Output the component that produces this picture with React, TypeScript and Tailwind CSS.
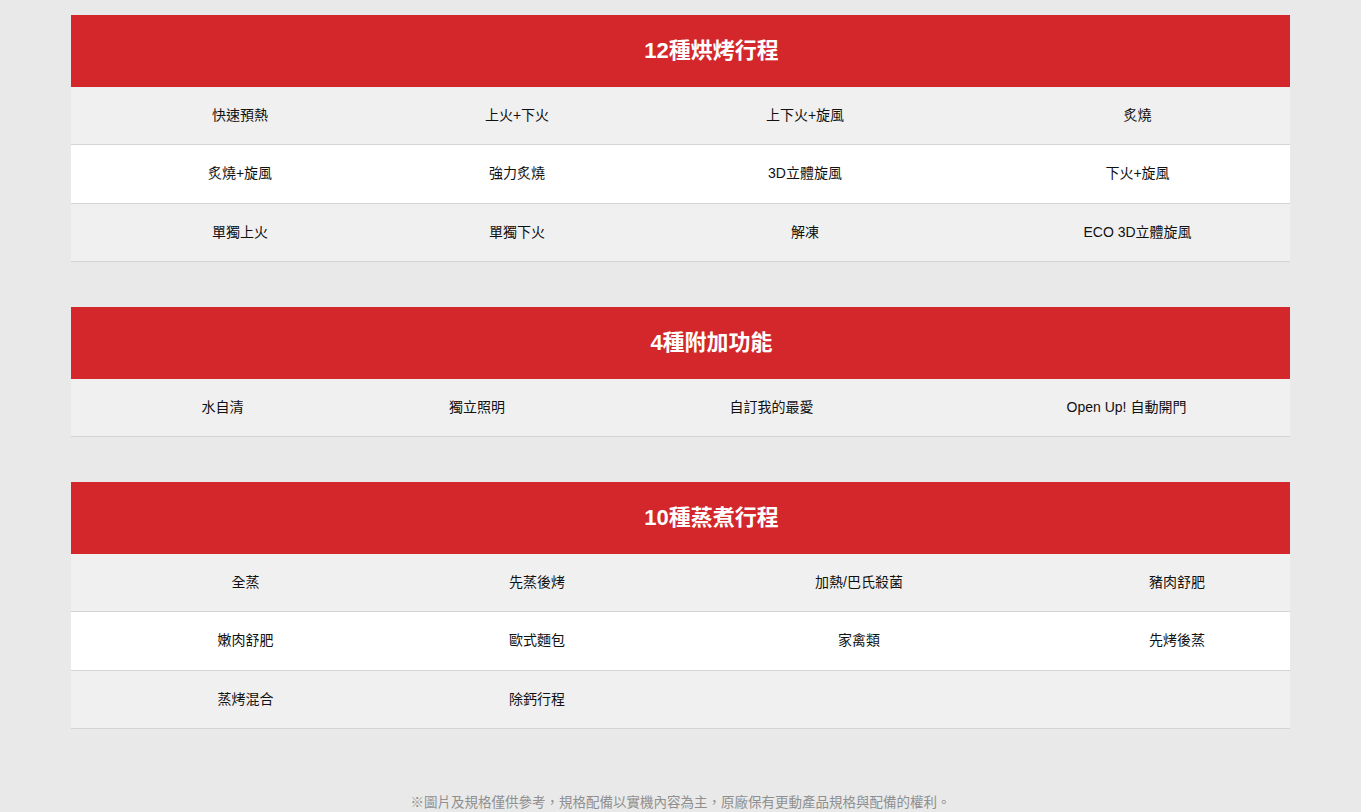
import React from "react";

const font = { fontFamily: '"Liberation Sans", "Noto Sans CJK TC", sans-serif' };

type Section = {
  title: string;
  cols: string;
  rows: string[][];
};

const sections: Section[] = [
  {
    title: "12種烘烤行程",
    cols: "grid-cols-[338px_216px_360px_305px]",
    rows: [
      ["快速預熱", "上火+下火", "上下火+旋風", "炙燒"],
      ["炙燒+旋風", "強力炙燒", "3D立體旋風", "下火+旋風"],
      ["單獨上火", "單獨下火", "解凍", "ECO 3D立體旋風"],
    ],
  },
  {
    title: "4種附加功能",
    cols: "grid-cols-[303px_206px_383px_327px]",
    rows: [["水自清", "獨立照明", "自訂我的最愛", "Open Up! 自動開門"]],
  },
  {
    title: "10種蒸煮行程",
    cols: "grid-cols-[349px_234px_410px_226px]",
    rows: [
      ["全蒸", "先蒸後烤", "加熱/巴氏殺菌", "豬肉舒肥"],
      ["嫩肉舒肥", "歐式麵包", "家禽類", "先烤後蒸"],
      ["蒸烤混合", "除鈣行程", "", ""],
    ],
  },
];

function SpecTable({ section }: { section: Section }) {
  return (
    <div className="w-full">
      <div className="h-[71.5px] bg-[#d3272b] flex items-center justify-center pl-[62px] text-white text-[22px] font-bold">
        {section.title}
      </div>
      {section.rows.map((row, i) => (
        <div
          key={i}
          className={`grid ${section.cols} h-[58.5px] border-b border-[#d4d4d4] ${i % 2 == 0 ? "bg-[#f0f0f0]" : "bg-white"}`}
        >
          {row.map((cell, j) => (
            <div key={j} className="flex items-center justify-center text-[14px] text-[#111]">
              {cell}
            </div>
          ))}
        </div>
      ))}
    </div>
  );
}

export default function App() {
  return (
    <div className="min-h-[812px] bg-[#e9e9e9]" style={font}>
      <div className="w-[1219px] mx-auto pt-[15px] flex flex-col gap-[45px]">
        {sections.map((s, i) => (
          <SpecTable key={i} section={s} />
        ))}
      </div>
      <p className="mt-[64px] text-center text-[13.5px] text-[#8f8f8f] pb-2">
        ※圖片及規格僅供參考，規格配備以實機內容為主，原廠保有更動產品規格與配備的權利。
      </p>
    </div>
  );
}
